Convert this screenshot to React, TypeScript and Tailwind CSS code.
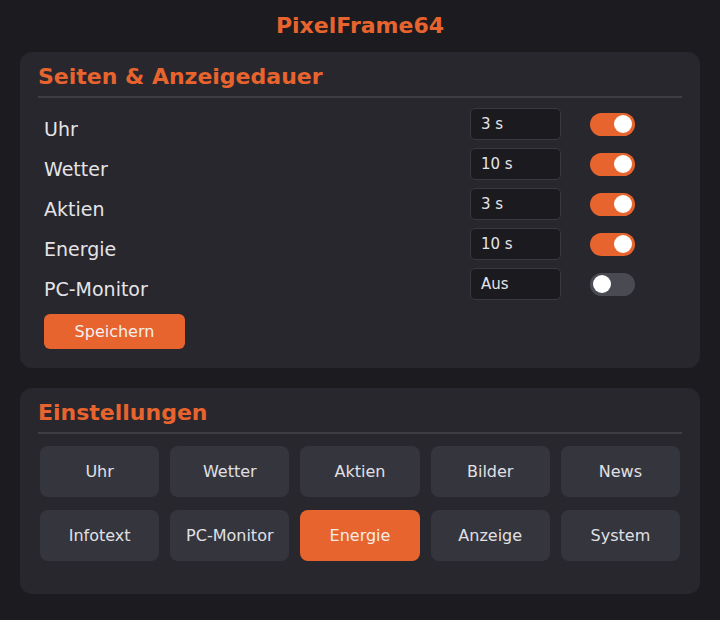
const pages = [
  { name: "Uhr", value: "3 s", on: true },
  { name: "Wetter", value: "10 s", on: true },
  { name: "Aktien", value: "3 s", on: true },
  { name: "Energie", value: "10 s", on: true },
  { name: "PC-Monitor", value: "Aus", on: false },
];

const settings = ["Uhr", "Wetter", "Aktien", "Bilder", "News", "Infotext", "PC-Monitor", "Energie", "Anzeige", "System"];

function Toggle({ on }: { on: boolean }) {
  return (
    <div
      className={`w-[45px] h-[23px] rounded-full flex items-center px-[3px] ${
        on ? "bg-[#e8642e] justify-end" : "bg-[#4a4a52] justify-start"
      }`}
    >
      <div className="w-[18px] h-[18px] rounded-full bg-white" />
    </div>
  );
}

export default function App() {
  return (
    <div className="min-h-[620px] bg-[#1c1b20] px-5 pt-[12px] pb-6 font-['DejaVu_Sans',sans-serif] text-[#e4e4e8]">
      <h1 className="text-center text-[22px] font-bold text-[#e8642e] leading-[28px]">PixelFrame64</h1>

      {/* Seiten */}
      <div className="mt-[12px] bg-[#28272d] rounded-xl px-[18px] pt-[12px] pb-[19px]">
        <h2 className="text-[22px] font-bold text-[#e8642e] leading-[26px]">Seiten &amp; Anzeigedauer</h2>
        <div className="mt-[6px] h-[2px] bg-[#3e3d44]" />
        <div className="mt-[6px] flex flex-col">
          {pages.map((p) => (
            <div key={p.name} className="h-10 flex items-center">
              <div className="w-[432px] pl-[6px] pt-[10px] text-[19px]">{p.name}</div>
              <div className="w-[91px] h-[32px] rounded-[5px] bg-[#1b1a1f] border border-[#3a3940] flex items-center px-[10px] text-[15px]">
                {p.value}
              </div>
              <div className="ml-[29px]">
                <Toggle on={p.on} />
              </div>
            </div>
          ))}
        </div>
        <button className="mt-[10px] ml-[6px] w-[141px] h-[35px] rounded-[6px] bg-[#e8642e] text-[16px] text-[#f4f0ee]">
          Speichern
        </button>
      </div>

      {/* Einstellungen */}
      <div className="mt-[20px] bg-[#28272d] rounded-xl px-[18px] pt-[12px] pb-[33px]">
        <h2 className="text-[22px] font-bold text-[#e8642e] leading-[26px]">Einstellungen</h2>
        <div className="mt-[6px] h-[2px] bg-[#3e3d44]" />
        <div className="mt-[12px] px-[2px] grid grid-cols-5 gap-x-[11px] gap-y-[13px]">
          {settings.map((s) => (
            <button
              key={s}
              className={`h-[51px] rounded-lg text-[16px] ${
                s === "Energie" ? "bg-[#e8642e] text-[#f4ece8]" : "bg-[#35353d] text-[#e0e0e4]"
              }`}
            >
              {s}
            </button>
          ))}
        </div>
      </div>
    </div>
  );
}
